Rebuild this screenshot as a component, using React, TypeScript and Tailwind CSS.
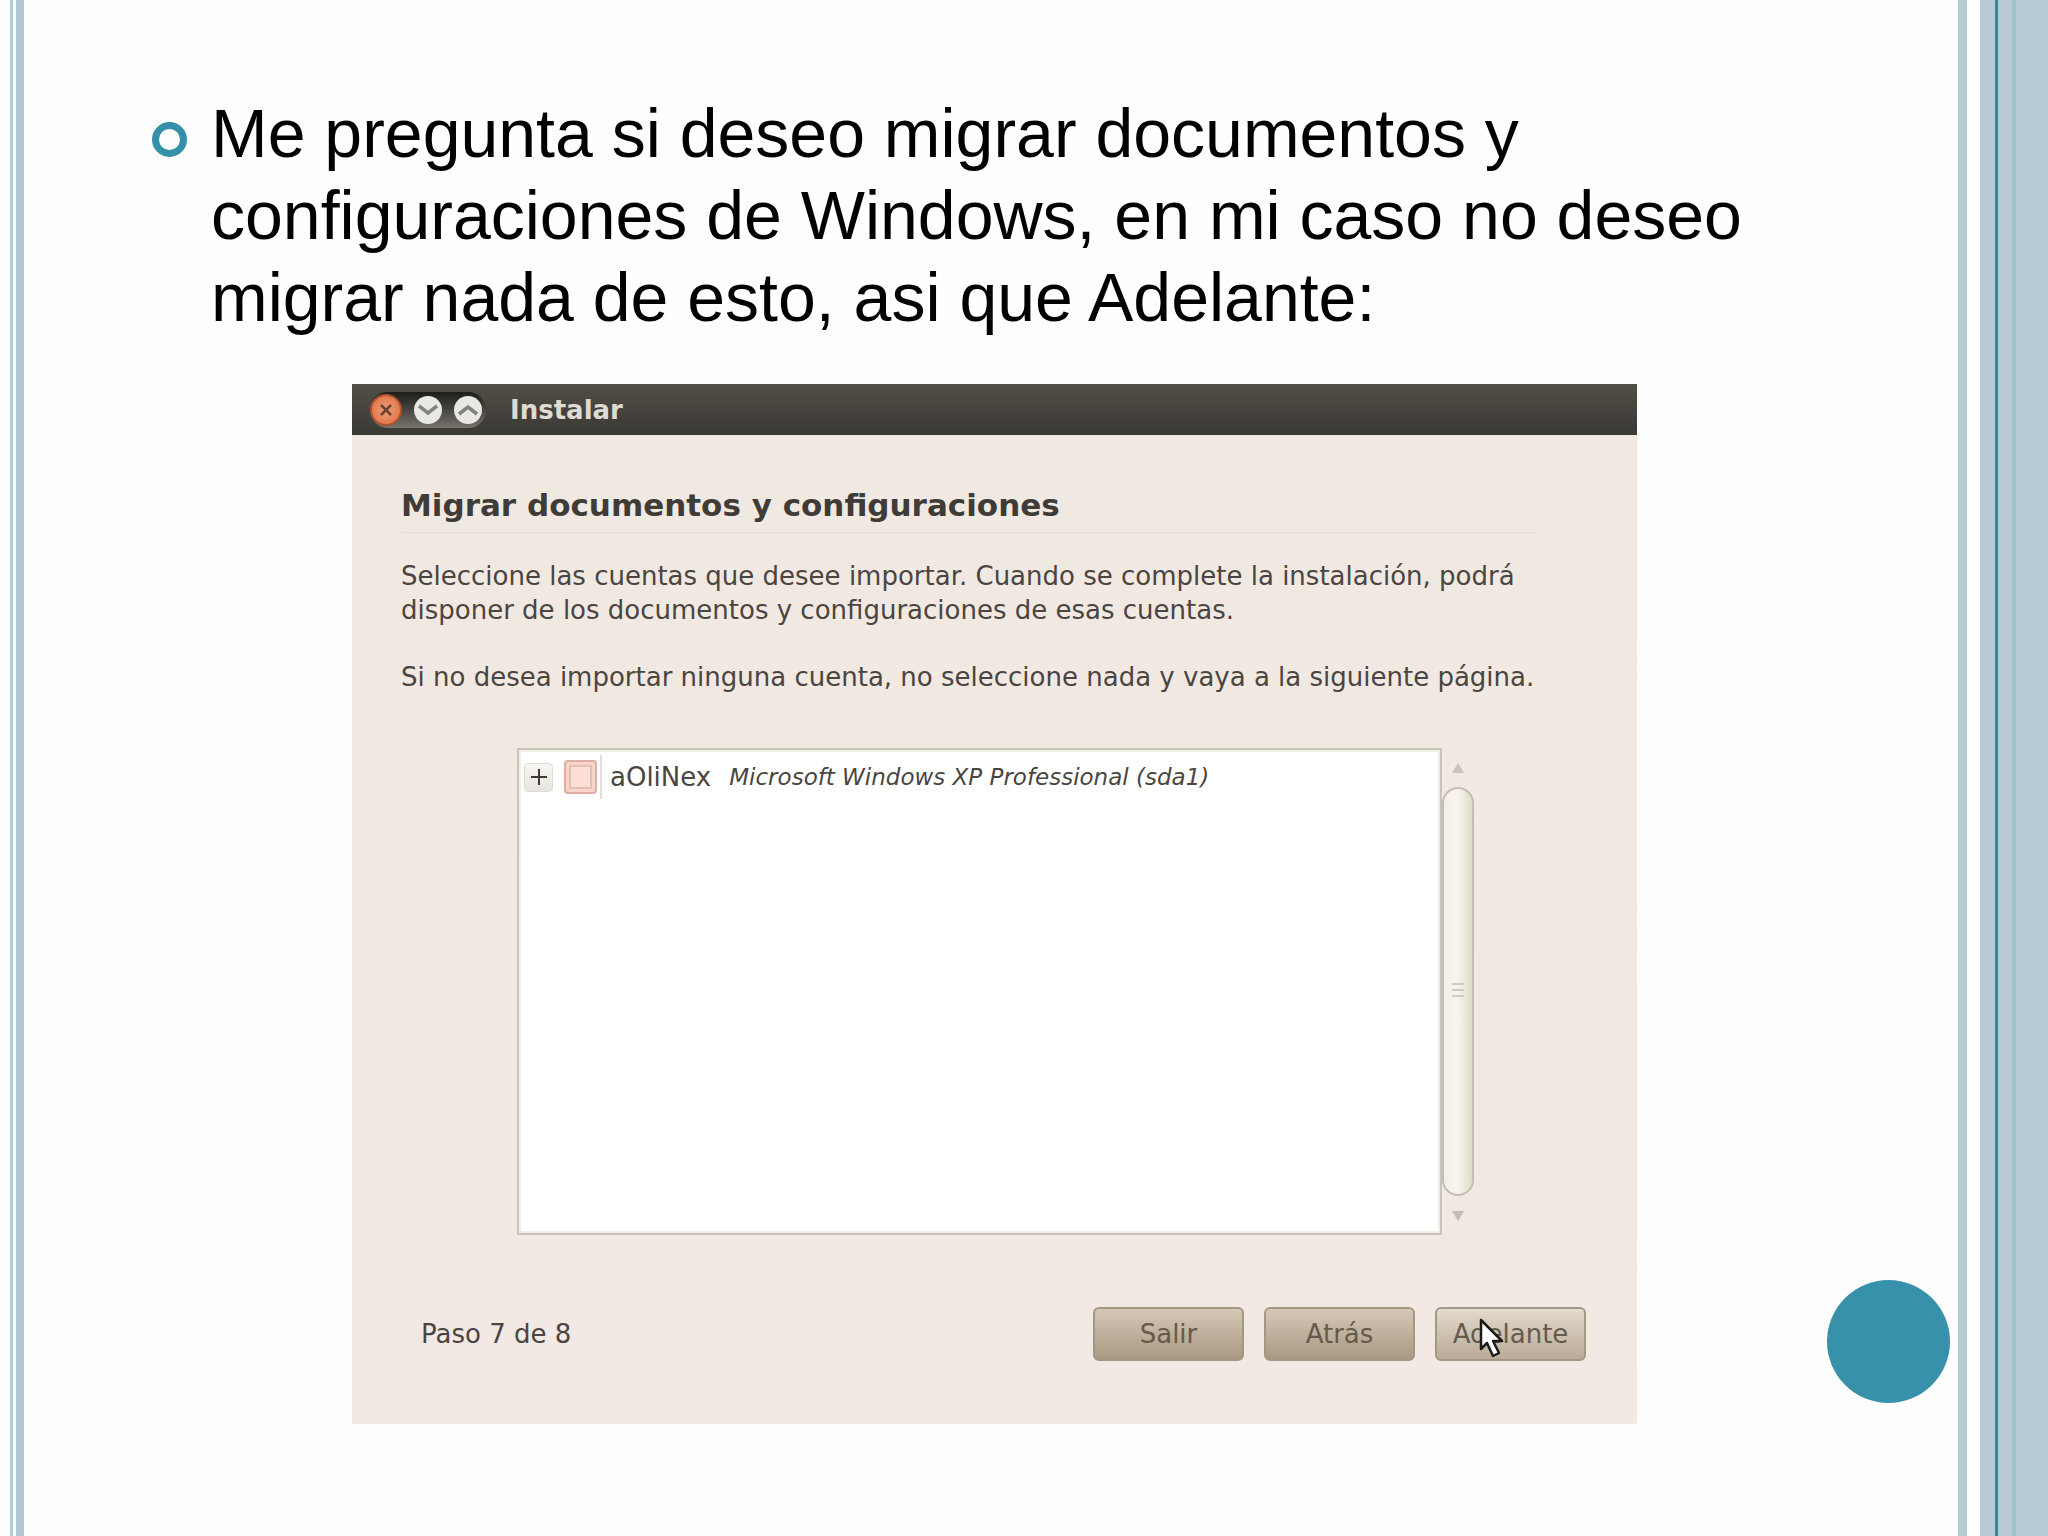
import React from 'react';

const LeftStripes = () => (
  <div className="flex shrink-0" aria-hidden="true">
    <div className="ml-2.5 w-[3px] bg-[#b3cbd4]" />
    <div className="ml-[3px] w-2 bg-[#b0c8d3]" />
  </div>
);

const RightStripes = () => (
  <div className="flex shrink-0" aria-hidden="true">
    <div className="w-[9px] bg-[#b6cbd2]" />
    <div className="w-[13px] bg-white" />
    <div className="w-[15px] bg-[#b8cbd6]" />
    <div className="w-[3px] bg-[#348aa3]" />
    <div className="w-3.5 bg-[#b7cad6]" />
    <div className="w-1 bg-[#a0c1ca]" />
    <div className="w-8 bg-[#b6ccd7]" />
  </div>
);

const WindowControls = () => (
  <div className="flex h-9 items-center rounded-full bg-linear-to-b from-[#1f1d1a] to-[#77746c] pr-1">
    <button
      aria-label="Cerrar"
      className="flex size-8 items-center justify-center rounded-full border-2 border-[#b2512b] bg-radial from-[#ee9d78] to-[#dd6a3c]"
    >
      <svg viewBox="0 0 14 14" className="size-3.5" fill="none" stroke="#6b4432" strokeWidth="2.5">
        <path d="M2 2l10 10M12 2L2 12" />
      </svg>
    </button>
    <button
      aria-label="Minimizar"
      className="ml-3 flex size-7 items-center justify-center rounded-full bg-[#e9e8e5]"
    >
      <svg viewBox="0 0 20 12" className="h-3 w-5" fill="none" stroke="#84827d" strokeWidth="3.5">
        <path d="M1 2l9 7 9-7" />
      </svg>
    </button>
    <button
      aria-label="Maximizar"
      className="ml-3 flex size-7 items-center justify-center rounded-full bg-[#e9e8e5]"
    >
      <svg viewBox="0 0 20 12" className="h-3 w-5" fill="none" stroke="#84827d" strokeWidth="3.5">
        <path d="M1 10l9-7 9 7" />
      </svg>
    </button>
  </div>
);

const Scrollbar = () => (
  <div className="flex w-8 shrink-0 flex-col items-center">
    <button aria-label="Subir" className="flex h-[39px] w-full items-center justify-center">
      <svg viewBox="0 0 12 10" className="h-2.5 w-3" fill="#c9c3b9">
        <path d="M6 0l6 10H0z" />
      </svg>
    </button>
    <div className="flex w-full flex-1 flex-col items-center justify-center gap-1 rounded-full border-2 border-[#c3beb0] bg-linear-to-r from-[#f3efe8] via-[#f8f3ee] to-[#dedcc6] pb-1">
      <span className="h-0.5 w-3 bg-[#cfcbc0]" />
      <span className="h-0.5 w-3 bg-[#cfcbc0]" />
      <span className="h-0.5 w-3 bg-[#cfcbc0]" />
    </div>
    <button aria-label="Bajar" className="flex h-[39px] w-full items-center justify-center">
      <svg viewBox="0 0 12 10" className="h-2.5 w-3" fill="#c3beb4">
        <path d="M6 10l6-10H0z" />
      </svg>
    </button>
  </div>
);

const AccountList = () => (
  <div className="mr-[163px] ml-[116px] flex h-[487px]">
    <div className="flex-1 border-2 border-[#c8c4b8] bg-white shadow-[inset_0_0_0_2px_#f0efe6]">
      <div className="mt-[5px] ml-[5px] flex h-11 items-center">
        <button
          aria-label="Expandir"
          className="flex h-[29px] w-[29px] items-center justify-center rounded border border-[#dfdbd5] bg-linear-to-b from-[#f8f6f3] to-[#e8e4df]"
        >
          <svg viewBox="0 0 16 16" className="size-4" stroke="#3c3b37" strokeWidth="2">
            <path d="M8 0v16M0 8h16" />
          </svg>
        </button>
        <input
          id="account"
          type="checkbox"
          className="ml-[11px] h-[34px] w-[33px] appearance-none rounded border-2 border-[#dfaea4] bg-[#fbe0d8] shadow-[inset_0_0_0_3px_#f8d4cb,inset_0_0_0_5px_#e6beb4]"
        />
        <label
          htmlFor="account"
          className="ml-[3px] flex h-11 items-center border-l-2 border-[#e3dcd8] pl-2 text-[26px] leading-[34px]"
        >
          aOliNex
          <em className="ml-[18px] text-[23px]">
            Microsoft Windows XP Professional (sda1)
          </em>
        </label>
      </div>
    </div>
    <Scrollbar />
  </div>
);

const Pointer = () => (
  <svg
    viewBox="0 0 26 42"
    className="pointer-events-none absolute top-2 left-[42px] h-[42px] w-[26px]"
    fill="#ffffff"
    stroke="#1c1a18"
    strokeWidth="2.5"
    strokeLinejoin="round"
  >
    <path d="M2 3v29l6-6 6 13 6-3-6-12h9z" />
  </svg>
);

const Installer = () => (
  <section className="min-w-0 flex-1 bg-[#f1e8e3] font-['DejaVu_Sans',sans-serif] text-[#4a4541]">
    <header className="flex h-[51px] items-center bg-linear-to-b from-[#524e48] to-[#3b3934] pl-[18px]">
      <WindowControls />
      <span className="ml-6 text-[26px] leading-[34px] font-bold text-[#dfdbd2]">Instalar</span>
    </header>
    <div className="bg-linear-to-b from-[#f0e9e1] to-[#f2e8e4] pt-[51px] pb-[63px] pl-[49px]">
      <h2 className="text-[31px] leading-[38px] font-bold text-[#3f3b37]">
        Migrar documentos y configuraciones
      </h2>
      <hr className="mt-2 mr-[100px] border-[#e9dfda]" />
      <div className="mt-[26px] mr-[100px] text-[26px] leading-[34px]">
        <p>
          Seleccione las cuentas que desee importar. Cuando se complete la instalación, podrá
          disponer de los documentos y configuraciones de esas cuentas.
        </p>
        <p className="mt-[33px]">
          Si no desea importar ninguna cuenta, no seleccione nada y vaya a la siguiente página.
        </p>
      </div>
      <div className="mt-[54px]">
        <AccountList />
      </div>
      <footer className="mt-[72px] mr-[51px] ml-5 flex items-center gap-5 text-[26px]">
        <span className="mr-auto">Paso 7 de 8</span>
        <button className="h-[54px] w-[151px] rounded-md border-2 border-[#a39883] bg-linear-to-b from-[#d5c8b6] to-[#a99982] text-[#655a4e]">
          Salir
        </button>
        <button className="h-[54px] w-[151px] rounded-md border-2 border-[#a39883] bg-linear-to-b from-[#d5c8b6] to-[#a99982] text-[#655a4e]">
          Atrás
        </button>
        <button className="relative h-[54px] w-[151px] rounded-md border-2 border-[#a39883] bg-linear-to-b from-[#e2dacd] to-[#b9ab96] text-[#655a4e]">
          Adelante
          <Pointer />
        </button>
      </footer>
    </div>
  </section>
);

export default function App() {
  return (
    <div className="flex min-h-screen bg-[#fefefe]">
      <LeftStripes />
      <main className="min-w-0 flex-1 pt-[92px]">
        <div className="mr-[180px] ml-32 flex items-start font-['Liberation_Sans',Arial,sans-serif] text-[68px] leading-[82px] text-black">
          <span className="mt-[30px] size-[35px] shrink-0 rounded-full border-[7px] border-[#3591a9]" />
          <p className="ml-6">
            Me pregunta si deseo migrar documentos y configuraciones de Windows, en mi caso no
            deseo migrar nada de esto, asi que Adelante:
          </p>
        </div>
        <div className="mt-[46px] mr-2 ml-[328px] flex items-end">
          <Installer />
          <div className="mb-[21px] ml-[190px] size-[123px] shrink-0 rounded-full bg-[#3891aa]" />
        </div>
      </main>
      <RightStripes />
    </div>
  );
}
